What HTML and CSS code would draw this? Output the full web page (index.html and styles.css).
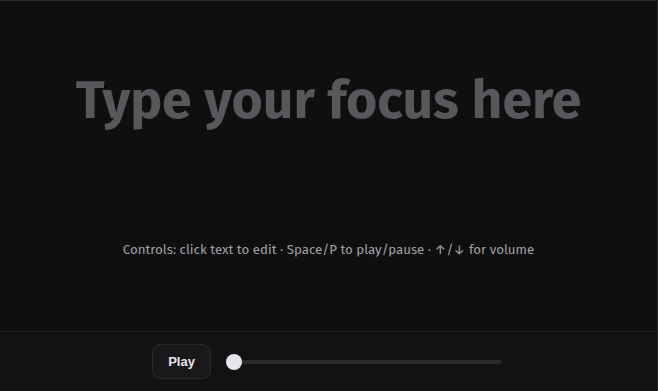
FILE: index.html
```html
<!DOCTYPE html>
<html>
<head>
<meta charset="utf-8">
<link rel="stylesheet" href="styles.css">
</head>
<body>
<div class="app">
  <main class="stage">
    <h1 class="focus">Type your focus here</h1>
    <p class="hint">Controls: click text to edit · Space/P to play/pause · ↑/↓ for volume</p>
  </main>
  <footer class="bar">
    <button class="play">Play</button>
    <div class="slider"><span class="thumb"></span></div>
  </footer>
</div>
</body>
</html>
```
FILE: styles.css
```css
* { box-sizing: border-box; }
html, body { margin: 0; height: 100%; }
body { background: #0f0f10; }
.app {
  height: 391px;
  width: 658px;
  display: flex;
  flex-direction: column;
  border-top: 1px solid #2b2b2e;
  border-right: 1px solid #2b2b2e;
  background: #0f0f10;
}
.stage {
  flex: 1;
  display: flex;
  flex-direction: column;
  align-items: center;
}
.focus {
  margin: 69px 0 0;
  font-family: "Fira Sans", "Open Sans", sans-serif;
  font-weight: 700;
  font-size: 53.5px;
  line-height: 60px;
  color: #57575c;
}
.hint {
  margin: 112px 0 0;
  font-family: "Fira Sans", "Open Sans", sans-serif;
  font-size: 13.3px;
  color: #a1a1a6;
}
.bar {
  height: 60px;
  border-top: 1px solid #222225;
  background: #121214;
  display: flex;
  align-items: center;
  padding-left: 152px;
  gap: 15px;
}
.play {
  width: 59px;
  height: 35px;
  border-radius: 8px;
  background: #19191b;
  border: 1px solid #29292c;
  color: #e6e6ea;
  font-family: "Liberation Sans", Arial, sans-serif;
  font-weight: 700;
  font-size: 13px;
}
.slider {
  position: relative;
  width: 276px;
  height: 4px;
  border-radius: 2px;
  background: #2a2a2d;
}
.thumb {
  position: absolute;
  left: 0;
  top: -6px;
  width: 16px;
  height: 16px;
  border-radius: 50%;
  background: #e6e6ea;
}
```
